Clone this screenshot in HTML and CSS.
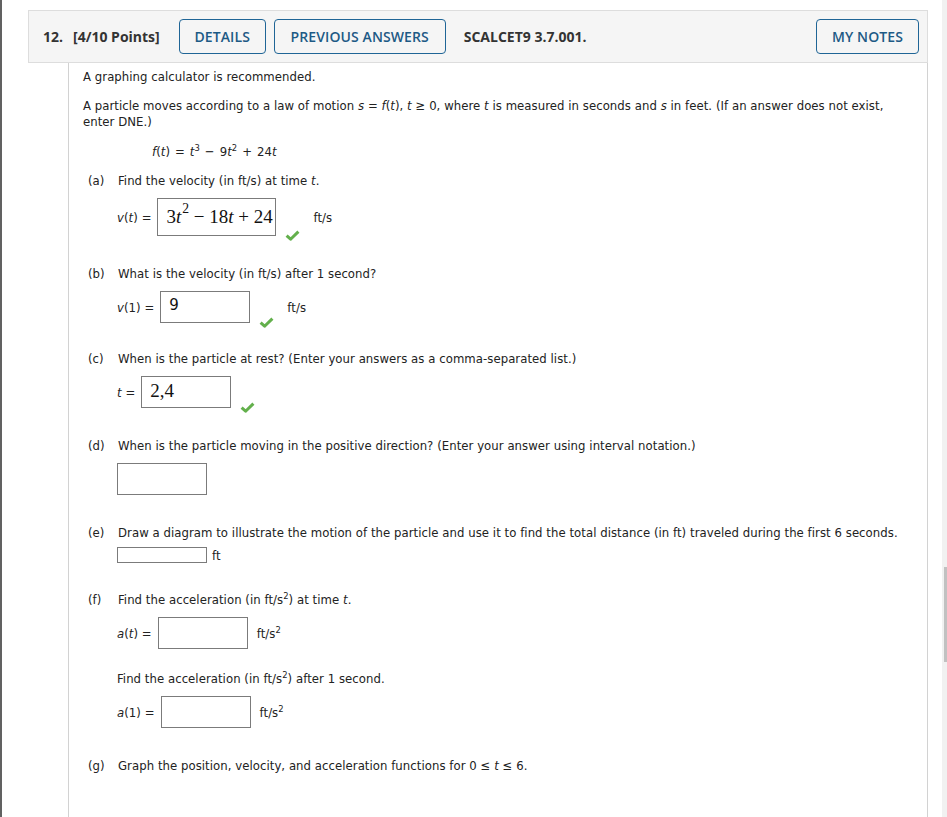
FILE: index.html
```html
<!DOCTYPE html>
<html lang="en">
<head>
<meta charset="utf-8">
<title>Question 12</title>
<link rel="stylesheet" href="styles.css">
</head>
<body>
<div class="page">
  <div class="question">
    <div class="qhead">
      <span class="qnum">12.</span>
      <span class="qpts">[4/10 Points]</span>
      <button class="btn btn-details">DETAILS</button>
      <button class="btn btn-prev">PREVIOUS ANSWERS</button>
      <span class="qcode">SCALCET9 3.7.001.</span>
      <button class="btn btn-notes">MY NOTES</button>
    </div>
    <div class="qbody">
      <p class="intro">A graphing calculator is recommended.</p>
      <p class="prompt">A particle moves according to a law of motion <i>s</i> = <i>f</i>(<i>t</i>), <i>t</i> ≥ 0, where <i>t</i> is measured in seconds and <i>s</i> in feet. (If an answer does not exist, enter DNE.)</p>
      <p class="formula"><i>f</i>(<i>t</i>) = <i>t</i><sup>3</sup> − 9<i>t</i><sup>2</sup> + 24<i>t</i></p>

      <div class="part part-first">
        <p class="pq"><span class="pl">(a)</span><span>Find the velocity (in ft/s) at time <i>t</i>.</span></p>
        <div class="ans">
          <span class="var"><i>v</i>(<i>t</i>) =</span>
          <span class="box box-wide"><span class="math">3<i>t</i><sup class="msup">2</sup> − 18<i>t</i> + 24</span></span>
          <svg class="check" width="15" height="11" viewBox="0 0 15 11"><path d="M1.6 5.6 L5.6 9.2 L13.4 1.6" fill="none" stroke="#63b04c" stroke-width="3" stroke-linejoin="round"/></svg>
          <span class="unit unit-check">ft/s</span>
        </div>
      </div>

      <div class="part">
        <p class="pq"><span class="pl">(b)</span><span>What is the velocity (in ft/s) after 1 second?</span></p>
        <div class="ans">
          <span class="var"><i>v</i>(1) =</span>
          <span class="box"><span class="plain">9</span></span>
          <svg class="check" width="15" height="11" viewBox="0 0 15 11"><path d="M1.6 5.6 L5.6 9.2 L13.4 1.6" fill="none" stroke="#63b04c" stroke-width="3" stroke-linejoin="round"/></svg>
          <span class="unit unit-check">ft/s</span>
        </div>
      </div>

      <div class="part part-tight">
        <p class="pq"><span class="pl">(c)</span><span>When is the particle at rest? (Enter your answers as a comma-separated list.)</span></p>
        <div class="ans ans-c">
          <span class="var"><i>t</i> =</span>
          <span class="box"><span class="math math-sm">2,4</span></span>
          <svg class="check" width="15" height="11" viewBox="0 0 15 11"><path d="M1.6 5.6 L5.6 9.2 L13.4 1.6" fill="none" stroke="#63b04c" stroke-width="3" stroke-linejoin="round"/></svg>
        </div>
      </div>

      <div class="part">
        <p class="pq"><span class="pl">(d)</span><span>When is the particle moving in the positive direction? (Enter your answer using interval notation.)</span></p>
        <div class="ans">
          <span class="box"></span>
        </div>
      </div>

      <div class="part">
        <p class="pq"><span class="pl">(e)</span><span>Draw a diagram to illustrate the motion of the particle and use it to find the total distance (in ft) traveled during the first 6 seconds.</span></p>
        <div class="ans ans-e">
          <span class="box box-small"></span>
          <span class="unit unit-ft">ft</span>
        </div>
      </div>

      <div class="part part-f">
        <p class="pq"><span class="pl">(f)</span><span>Find the acceleration (in ft/s<sup>2</sup>) at time <i>t</i>.</span></p>
        <div class="ans">
          <span class="var"><i>a</i>(<i>t</i>) =</span>
          <span class="box"></span>
          <span class="unit">ft/s<sup>2</sup></span>
        </div>
        <p class="pq-sub">Find the acceleration (in ft/s<sup>2</sup>) after 1 second.</p>
        <div class="ans">
          <span class="var"><i>a</i>(1) =</span>
          <span class="box"></span>
          <span class="unit">ft/s<sup>2</sup></span>
        </div>
      </div>

      <div class="part">
        <p class="pq"><span class="pl">(g)</span><span>Graph the position, velocity, and acceleration functions for 0 ≤ <i>t</i> ≤ 6.</span></p>
      </div>
    </div>
  </div>
</div>
<div class="scrollbar"><div class="thumb"></div></div>
</body>
</html>
```

FILE: styles.css
```css
* {
  box-sizing: border-box;
}

html,
body {
  margin: 0;
  padding: 0;
  background: #ffffff;
}

body {
  font-family: "DejaVu Sans Condensed", "DejaVu Sans", Tahoma, sans-serif;
  font-stretch: condensed;
  font-size: 13px;
  letter-spacing: 0.05px;
  color: #222222;
  overflow: hidden;
}

p {
  margin: 0;
  line-height: 16px;
}

sup {
  font-size: 0.72em;
  line-height: 0;
  vertical-align: 0.5em;
}

.page {
  border-left: 2px solid #616161;
  min-height: 817px;
  padding: 10px 0 0 26px;
}

.question {
  width: 900px;
}

/* Header bar */
.qhead {
  display: flex;
  align-items: center;
  height: 53px;
  background: #f5f5f5;
  border: 1px solid #dddddd;
  padding: 0 8px 0 14px;
  font-family: "Open Sans", sans-serif;
  font-stretch: normal;
  font-size: 14px;
  letter-spacing: 0;
  color: #333333;
}

.qnum,
.qpts,
.qcode {
  font-weight: 700;
}

.qpts {
  margin-left: 10px;
}

.btn {
  font-family: "Open Sans", sans-serif;
  font-stretch: normal;
  font-size: 14px;
  font-weight: 600;
  letter-spacing: 0.1px;
  color: #1d5a85;
  background: transparent;
  border: 1px solid #1f6596;
  border-radius: 4px;
  height: 35px;
  padding: 0;
  text-align: center;
}

.btn-details {
  margin-left: 19px;
  width: 87px;
}

.btn-prev {
  margin-left: 8px;
  width: 172px;
}

.qcode {
  margin-left: 18px;
}

.btn-notes {
  margin-left: auto;
  width: 103px;
}

/* Body */
.qbody {
  margin-left: 40px;
  border-left: 1px solid #d2d2d2;
  border-right: 1px solid #d2d2d2;
  padding: 6px 14px 0 14px;
  min-height: 760px;
}

.prompt {
  margin-top: 13px;
  max-width: 812px;
}

.formula {
  margin-top: 14px;
  padding-left: 69px;
  word-spacing: 1.2px;
}

.part {
  margin-top: 30px;
}

.part-first {
  margin-top: 13px;
}

.part-tight {
  margin-top: 28px;
}

.part-f {
  margin-top: 29px;
}

.pq {
  display: flex;
  padding-left: 5px;
}

.pl {
  width: 30px;
  flex: none;
}

.pq-sub {
  margin-top: 22px;
  padding-left: 34px;
}

.ans {
  display: flex;
  align-items: center;
  margin-top: 9px;
  margin-left: 34px;
}

.ans-e {
  margin-top: 6px;
}

.var {
  margin-right: 6px;
  white-space: nowrap;
}

.box {
  display: flex;
  align-items: center;
  width: 90px;
  height: 32px;
  border: 1px solid #7b7b7b;
  padding-left: 8px;
  background: #ffffff;
}

.box-wide {
  width: 119px;
  height: 38px;
}

.box-small {
  height: 16px;
}

.math {
  font-family: "Liberation Serif", "Times New Roman", serif;
  font-stretch: normal;
  font-size: 19px;
  letter-spacing: 0;
  color: #111111;
  white-space: nowrap;
}

.msup {
  vertical-align: 0.75em;
  margin-left: 1px;
}

.math-sm {
  font-size: 19px;
  margin-top: -3px;
}

.plain {
  font-family: "DejaVu Sans", sans-serif;
  font-stretch: normal;
  font-size: 15px;
  color: #111111;
  margin-top: -5px;
}

.check {
  flex: none;
  align-self: flex-end;
  margin: 0 0 -5px 9px;
}

.unit {
  margin-left: 9px;
  white-space: nowrap;
}

.unit-check {
  margin-left: 13px;
}

.unit-ft {
  margin-left: 5px;
}

/* Scrollbar rendering */
.scrollbar {
  position: fixed;
  top: 0;
  right: 0;
  width: 5px;
  height: 100%;
  background: #f1f1f1;
}

.thumb {
  position: absolute;
  top: 567px;
  left: 2px;
  width: 3px;
  height: 95px;
  background: #c1c1c1;
}
```
